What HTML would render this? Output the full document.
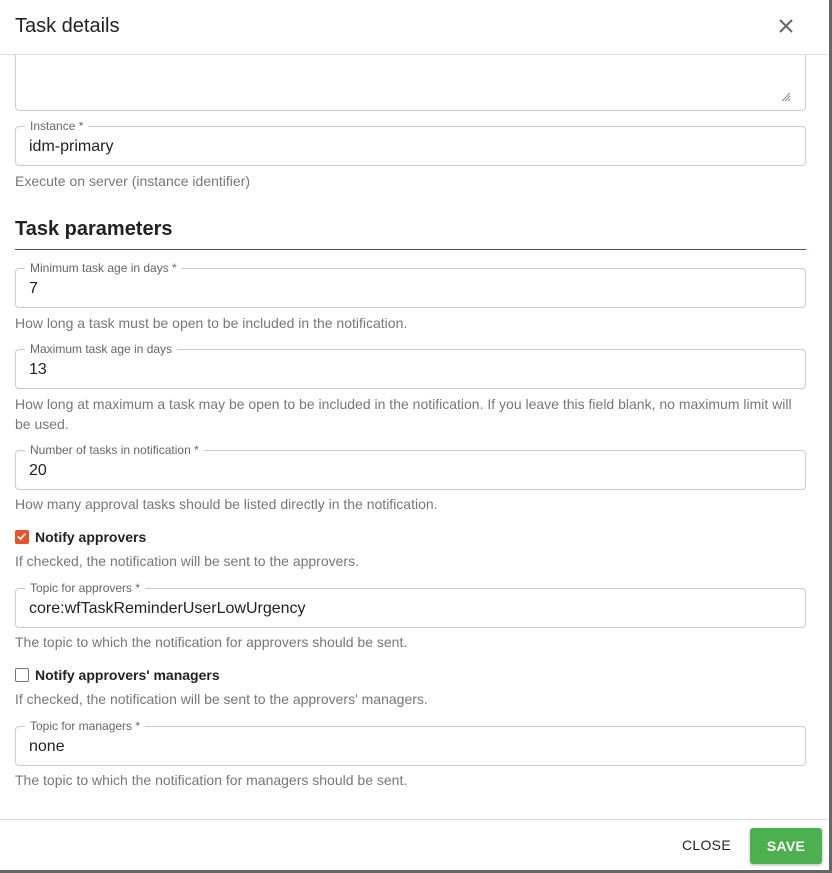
<!DOCTYPE html>
<html><head><meta charset="utf-8"><style>
*{box-sizing:border-box;margin:0;padding:0}
body{width:832px;height:873px;background:#666;font-family:"Liberation Sans",sans-serif;position:relative;overflow:hidden}
.dlg{position:absolute;left:0;top:0;width:829px;height:870px;background:#fff}
.a{position:absolute}
.hdr{left:0;top:0;width:829px;height:55px;border-bottom:1px solid #ddd;background:#fff;z-index:2}
.title{left:15px;top:15px;font-size:20px;color:#222;z-index:3;font-weight:500}
.f{position:absolute;left:15px;width:791px;height:40px;border:1px solid #ccc;border-radius:4px}
.f .l{position:absolute;left:9px;top:-8px;background:#fff;padding:0 5px;font-size:12px;color:#666;line-height:14px}
.f .v{position:absolute;left:13px;top:10px;font-size:16px;color:#222;line-height:20px}
.h{position:absolute;left:15px;font-size:14px;color:#777;line-height:20px}
.cb{position:absolute;left:15px;width:14px;height:14px;border:1.5px solid #777;border-radius:2px}
.cl{position:absolute;left:35px;font-size:14px;font-weight:bold;color:#222;line-height:16px}
</style></head><body>
<div class="dlg">
<div class="a hdr"></div>
<div class="a title">Task details</div>
<svg class="a" style="left:778px;top:18px;z-index:3" width="16" height="16" viewBox="0 0 16 16"><path d="M2 2L14 14M14 2L2 14" stroke="#666" stroke-width="2"/></svg>
<div class="f" style="top:40px;height:71px;border-top:none;border-radius:0 0 4px 4px"></div>
<svg class="a" style="left:781px;top:92px" width="10" height="10"><path d="M9 1L1 9M9 4L4 9M9 7L7 9" stroke="#888" stroke-width="1"/></svg>
<div class="f" style="top:126px"><span class="l">Instance *</span><span class="v">idm-primary</span></div>
<div class="h" style="top:171px">Execute on server (instance identifier)</div>
<div class="a" style="left:15px;top:218px;font-size:20px;font-weight:bold;color:#222">Task parameters</div>
<div class="a" style="left:15px;top:249px;width:791px;height:1px;background:#c8184a"></div>
<div class="f" style="top:268px"><span class="l">Minimum task age in days *</span><span class="v">7</span></div>
<div class="h" style="top:313px">How long a task must be open to be included in the notification.</div>
<div class="f" style="top:349px"><span class="l">Maximum task age in days</span><span class="v">13</span></div>
<div class="h" style="top:394px;width:791px">How long at maximum a task may be open to be included in the notification. If you leave this field blank, no maximum limit will be used.</div>
<div class="f" style="top:450px"><span class="l">Number of tasks in notification *</span><span class="v">20</span></div>
<div class="h" style="top:494px">How many approval tasks should be listed directly in the notification.</div>
<div class="cb" style="top:530px;background:#e8532a;border-color:#e8532a"><svg width="11" height="11" style="position:absolute;left:0;top:0"><path d="M2 5.5L4.5 8L9.5 2.5" stroke="#fff" stroke-width="1.8" fill="none"/></svg></div>
<div class="cl" style="top:529px">Notify approvers</div>
<div class="h" style="top:551px">If checked, the notification will be sent to the approvers.</div>
<div class="f" style="top:588px"><span class="l">Topic for approvers *</span><span class="v">core:wfTaskReminderUserLowUrgency</span></div>
<div class="h" style="top:632px">The topic to which the notification for approvers should be sent.</div>
<div class="cb" style="top:668px"></div>
<div class="cl" style="top:667px">Notify approvers' managers</div>
<div class="h" style="top:689px">If checked, the notification will be sent to the approvers' managers.</div>
<div class="f" style="top:726px"><span class="l">Topic for managers *</span><span class="v">none</span></div>
<div class="h" style="top:770px">The topic to which the notification for managers should be sent.</div>
<div class="a" style="left:0;top:819px;width:829px;height:1px;background:#ddd"></div>
<div class="a" style="left:682px;top:837px;font-size:14px;font-weight:500;color:#222;letter-spacing:0.3px">CLOSE</div>
<div class="a" style="left:750px;top:828px;width:72px;height:36px;background:#4caf50;border-radius:3px;box-shadow:0 1px 3px rgba(0,0,0,.3);color:#fff;font-size:14px;font-weight:bold;text-align:center;line-height:36px;letter-spacing:0.3px">SAVE</div>
</div>
</body></html>
